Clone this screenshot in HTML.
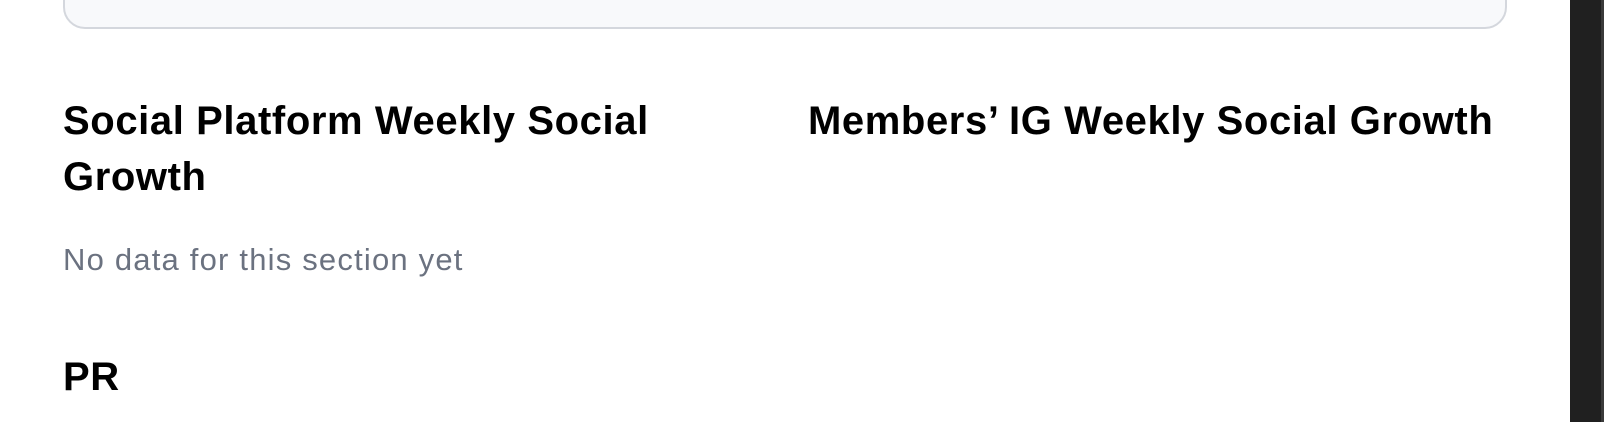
<!DOCTYPE html>
<html><head><meta charset="utf-8"><style>
body{margin:0;width:1604px;height:422px;background:#fff;position:relative;overflow:hidden;font-family:"Liberation Sans",sans-serif;}
.box{position:absolute;left:63px;top:-40px;width:1440px;height:65px;background:#f8f9fb;border:2px solid #d4d7dd;border-radius:22px;}
.bar{position:absolute;left:1570px;top:0;width:34px;height:422px;background:#202020;}
.bar2{position:absolute;left:1601px;top:0;width:3px;height:422px;background:#3a3a3a;}
h2{position:absolute;margin:0;font-size:40px;font-weight:bold;color:#000;line-height:56px;letter-spacing:0.6px;}
.g{position:absolute;left:63px;top:242px;font-size:31px;color:#6b7280;margin:0;letter-spacing:1.2px;}
</style></head><body>
<div class="box"></div>
<div class="bar"></div><div class="bar2"></div>
<h2 style="left:63px;top:93px;width:660px">Social Platform Weekly Social Growth</h2>
<h2 style="left:808px;top:93px;width:740px">Members’ IG Weekly Social Growth</h2>
<p class="g">No data for this section yet</p>
<h2 style="left:63px;top:349px">PR</h2>
</body></html>
